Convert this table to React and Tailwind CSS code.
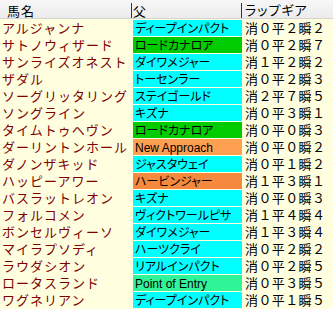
const rows = [
  ["アルジャンナ", "ディープインパクト", "bg-[#00ffff]", "消０平２瞬２"],
  ["サトノウィザード", "ロードカナロア", "bg-[#00cc00]", "消０平２瞬７"],
  ["サンライズオネスト", "ダイワメジャー", "bg-[#00ffff]", "消１平２瞬２"],
  ["ザダル", "トーセンラー", "bg-[#00ffff]", "消０平２瞬３"],
  ["ソーグリッタリング", "ステイゴールド", "bg-[#00ffff]", "消２平７瞬５"],
  ["ソングライン", "キズナ", "bg-[#00ffff]", "消０平３瞬１"],
  ["タイムトゥヘヴン", "ロードカナロア", "bg-[#00cc00]", "消０平０瞬３"],
  ["ダーリントンホール", "New Approach", "bg-[#ffa050]", "消０平０瞬２"],
  ["ダノンザキッド", "ジャスタウェイ", "bg-[#00ffff]", "消０平１瞬２"],
  ["ハッピーアワー", "ハービンジャー", "bg-[#f58a3f]", "消１平３瞬１"],
  ["バスラットレオン", "キズナ", "bg-[#00ffff]", "消０平０瞬３"],
  ["フォルコメン", "ヴィクトワールピサ", "bg-[#00ffff]", "消１平４瞬４"],
  ["ボンセルヴィーソ", "ダイワメジャー", "bg-[#00ffff]", "消１平３瞬４"],
  ["マイラプソディ", "ハーツクライ", "bg-[#00ffff]", "消０平２瞬２"],
  ["ラウダシオン", "リアルインパクト", "bg-[#00ffff]", "消０平２瞬５"],
  ["ロータスランド", "Point of Entry", "bg-[#30f598]", "消０平３瞬５"],
  ["ワグネリアン", "ディープインパクト", "bg-[#00ffff]", "消０平１瞬５"],
];

export default function App() {
  return (
    <div className="w-[333px] h-[309px] overflow-hidden bg-[#ffffe0] font-['Liberation_Sans','Noto_Sans_CJK_JP',sans-serif] text-black">
      {/* header */}
      <div className="flex h-[19px] border-b border-[#d4d4d4] bg-gradient-to-b from-[#f7f7f7] to-[#ececec] text-[13px] leading-none">
        <div className="flex w-[132px] items-center border-r border-[#333] pl-[7px] pt-[2px] my-[3px] mb-0">
          <span className="tracking-[1px]">馬名</span>
        </div>
        <div className="flex w-[110px] items-center border-r border-[#333] pl-[1px] pt-[2px] my-[3px] mb-0">
          父
        </div>
        <div className="flex flex-1 items-center pl-[3px] pt-[2px]">
          <span className="[font-feature-settings:'palt'] tracking-[1px]">ラップギア</span>
        </div>
      </div>
      {/* body */}
      {rows.map(([name, sire, color, gear]) => (
        <div key={name} className="flex h-[17px] pt-px">
          <div className="flex w-[132px] items-center pl-[2px] pt-[1px] text-[13px] leading-none tracking-[1px] text-[#800000]">
            {name}
          </div>
          <div className={`ml-px flex w-[109px] items-center pl-[2px] pt-[1px] text-[12px] leading-none [font-feature-settings:'palt'] ${color}`}>
            {sire}
          </div>
          <div className="ml-px flex flex-1 items-center pl-[2px] pt-[1px] text-[13px] leading-none tracking-[0.4px]">
            {gear}
          </div>
        </div>
      ))}
    </div>
  );
}
